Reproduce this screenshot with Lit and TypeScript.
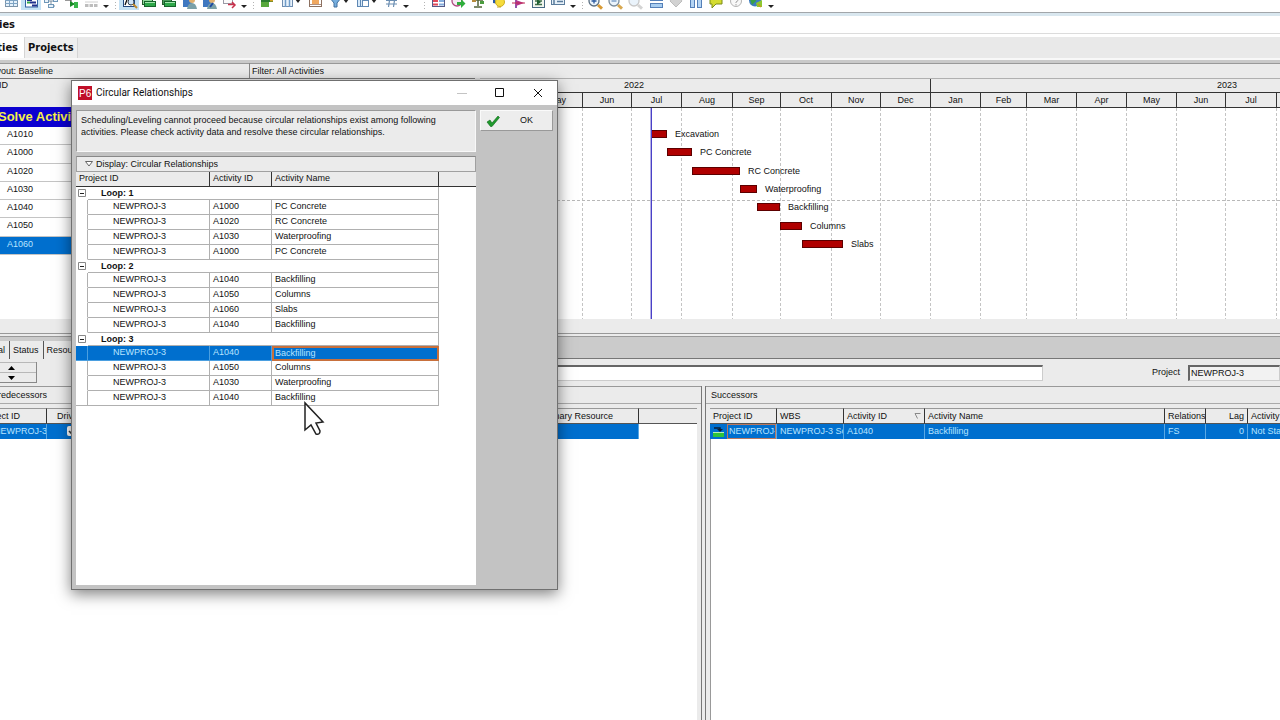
import { LitElement, html, css, svg, nothing } from "lit";
import { customElement } from "lit/decorators.js";
import { classMap } from "lit/directives/class-map.js";

interface Tool {
  name: string;
  art: unknown;
  on?: boolean;
  menu?: boolean;
}

const green = "#2fa84a";
const people = svg`<rect x="4" y="5" width="9" height="12" fill="#3f78c0"/><circle cx="13" cy="10" r="3" fill="#e0b070"/><path d="M8 19q1-6 5-6t5 6z" fill="#7aa0a8"/>`;
const lens = (c: string, h: string) =>
  svg`<circle cx="8" cy="11" r="5" fill="#eaf3fb" stroke="${c}" stroke-width="1.3"/><path d="M12 15l4 3.600" stroke="${h}" stroke-width="3"/>`;

const groups: Tool[][] = [
  [
    { name: "Activity table", art: svg`<rect x="4.500" y="5.500" width="12" height="11" fill="#e4f1fb" stroke="#7c93a8"/><path d="M4 10.500h13M4 13.500h13M8.500 6v10M12.500 6v10" stroke="#7fa4c4"/>` },
    { name: "Gantt chart", on: true, art: svg`<rect x="4.500" y="4.500" width="12" height="12.500" fill="#fff" stroke="#3464a4"/><path d="M6 10h5M9 12.500h6M11 15.500h5" stroke="#1e2f8c" stroke-width="2"/><path d="M6 12.500h3" stroke="${green}" stroke-width="2"/>` },
    { name: "Activity network", art: svg`<path d="M5 11h5v6M10 11h5M10 16h4" fill="none" stroke="#7a8ea0"/><rect x="3.500" y="9.500" width="4" height="3" fill="#e8f2fa" stroke="#6f97b8"/><rect x="12.500" y="8.500" width="4" height="3" fill="#e8f2fa" stroke="#6f97b8"/><rect x="7.500" y="14.500" width="5" height="3" fill="#e8f2fa" stroke="#6f97b8"/>` },
    { name: "Trace logic", art: svg`<path d="M4 10h6v4h4" fill="none" stroke="#333"/><path d="M9 11l5 3-5 3z" fill="#198a26"/><rect x="13" y="12" width="4" height="6" fill="#39b54a"/>` },
    { name: "Usage", art: svg`<path d="M4 12h13" stroke="#d0d0d0"/><path d="M4 15.500h3.500M8.500 15.500H12M13 15.500h3.500" stroke="#bdbdbd" stroke-width="3"/>` },
  ],
  [
    { name: "Find", on: true, art: svg`<rect x="4.500" y="4.500" width="11" height="12" fill="#fff" stroke="#234a80"/><path d="M6 15l3-8 3 8" fill="none" stroke="#111" stroke-width="1.300"/><circle cx="12" cy="12" r="3" fill="#cfe4f5" stroke="#345"/><path d="M14 14l4 4" stroke="#c08a2c" stroke-width="2"/>` },
    { name: "Predecessors", art: svg`<rect x="3.500" y="6.500" width="10" height="8" fill="#8fd89a" stroke="#245c2c"/><rect x="5.500" y="11.500" width="11" height="5" fill="${green}" stroke="#15642a"/><path d="M6 12.500h10" stroke="#a5e6ae"/>` },
    { name: "Successors", art: svg`<rect x="3.500" y="6.500" width="9" height="8" fill="#4a9a5a" stroke="#245c2c"/><rect x="5.500" y="11.500" width="11" height="5" fill="${green}" stroke="#15642a"/><path d="M6 12.500h10" stroke="#a5e6ae"/>` },
    { name: "Resources", art: people },
    { name: "Roles", art: svg`${people}<path d="M11 17l3-4" stroke="#1c49a0" stroke-width="2"/>` },
    { name: "Codes", art: svg`<rect x="4.500" y="4.500" width="9" height="9" fill="#fafafa" stroke="#9a9aa6"/><path d="M9 14.500h6M13 12l3 3-3 3" fill="none" stroke="#c8304a" stroke-width="1.500"/>` },
  ],
  [
    { name: "Bars", art: svg`<path d="M4 8h12v4H4z" fill="#2c7c30"/><path d="M4 12h8v5H4z" fill="#57a83c"/><path d="M13 10h3" stroke="#d0a020" stroke-width="3"/>` },
    { name: "Columns", menu: true, art: svg`<rect x="5.500" y="5.500" width="10" height="11" fill="#e8f2fb" stroke="#6f8db0"/><path d="M8.500 6v11M12.500 6v11" stroke="#6f9cc8" stroke-width="1.500"/>` },
    { name: "Table font", art: svg`<rect x="4.500" y="5.500" width="12" height="11" fill="#fff" stroke="#8c7060"/><rect x="7" y="9" width="7" height="5" fill="#f0a860"/><path d="M5 14.500h11" stroke="#b09080"/>` },
    { name: "Filter", menu: true, art: svg`<path d="M5 8h11l-4 5v4H9v-4z" fill="#76aede" stroke="#416f9e"/>` },
    { name: "Group and sort", menu: true, art: svg`<rect x="4.500" y="5.500" width="11" height="11" fill="#d8eafa" stroke="#5f88b4"/><rect x="9.500" y="10.500" width="6" height="6" fill="#fff" stroke="#5f88b4"/><path d="M7.500 6v10" stroke="#5f88b4"/>` },
    { name: "Number", art: svg`<path d="M9 7L7.500 17M14 7l-1.500 10M5 10.500h11M5 14h11" stroke="#6b8eb2" stroke-width="1.200"/>` },
  ],
  [
    { name: "Spreadsheet", art: svg`<rect x="4.500" y="5.500" width="12" height="11" fill="#fff" stroke="#555a88"/><path d="M5 11h5M5 14.500h5" stroke="#e04858" stroke-width="2"/><path d="M11 11h5M11 14.500h5" stroke="#86aede" stroke-width="2"/>` },
    { name: "Schedule", art: svg`<circle cx="9" cy="11" r="5" fill="#f6e9f2" stroke="#b04a80" stroke-width="1.300"/><path d="M9 12h4V9l4.500 4.500L13 18v-3H9z" fill="#2fae3c"/>` },
    { name: "Level", art: svg`<path d="M10 8v8M6 17h8M5 10h10" stroke="#53643a" stroke-width="1.500"/><rect x="4" y="9" width="4" height="3" fill="#b78b3c"/><rect x="12" y="11" width="4" height="3" fill="#4c9c40"/>` },
    { name: "Progress", art: svg`<path d="M5 8l6 6-6-1z" fill="#2b5aa8"/><circle cx="12" cy="12" r="4.500" fill="#f6dc3c" stroke="#cfb020"/><path d="M9 17h4" stroke="#caa820"/>` },
    { name: "Spotlight", art: svg`<path d="M8 7v11" stroke="#6a1f90" stroke-width="1.500"/><path d="M8 10l8 3-8 3z" fill="#b43890"/><path d="M4 13h13" stroke="#c02850"/>` },
    { name: "Update", art: svg`<rect x="4.500" y="5.500" width="12" height="12" fill="#f2f6ee" stroke="#496a84"/><path d="M7 11h7M7 14.500h7" stroke="#3f6d48" stroke-width="1.500"/><path d="M9 9l4 3-4 3z" fill="#1f6030"/>` },
    { name: "Store period", art: svg`<rect x="3.500" y="5.500" width="13" height="9" fill="#e6f0f8" stroke="#5b7c9c"/><path d="M6 9v6M9 11.500h6M9 9h6" stroke="#5b7c9c" stroke-width="1.500"/>` },
  ],
  [
    { name: "Zoom in", art: svg`${lens("#5a6e80", "#d89a34")}<path d="M5.500 11h5M8 8.500v5" stroke="#2a5aa0" stroke-width="1.300"/>` },
    { name: "Zoom out", art: svg`${lens("#7a8c9c", "#d8a850")}<path d="M5.500 11h5" stroke="#4a78b0"/>` },
    { name: "Zoom to fit", art: lens("#c8c8c8", "#d4d4d4") },
    { name: "Split horizontal", art: svg`<rect x="4.500" y="5.500" width="12" height="5" fill="#eaf3fc" stroke="#5580b8"/><rect x="4.500" y="13.500" width="12" height="4" fill="#a8cdf0" stroke="#5580b8"/>` },
    { name: "Hint", art: svg`<path d="M10 17l-6-6 3-4h6l3 4z" fill="#d2d2d2" stroke="#bcbcbc"/>` },
    { name: "Split vertical", art: svg`<rect x="4.500" y="5.500" width="4" height="12" fill="#b5d5f4" stroke="#5580b8"/><rect x="11.500" y="5.500" width="4" height="12" fill="#b5d5f4" stroke="#5580b8"/>` },
    { name: "Discussion", art: svg`<path d="M4 7h12v7h-6l-4 4v-4H4z" fill="#d4dc30" stroke="#7c8c18"/>` },
    { name: "Help", art: svg`<circle cx="10" cy="11" r="5.500" fill="#f8f8f8" stroke="#b4b4b4"/><path d="M8.500 9q1.500-2 3 0t-1.500 3v1M10 14v1.500" fill="none" stroke="#a4a4a4"/>` },
    { name: "Online", art: svg`<circle cx="9" cy="10.500" r="6" fill="#3c7cc0"/><path d="M4 9l5-2 1 4-4 4z" fill="#38a048"/><path d="M10 13l6-3v7h-5z" fill="#8cc832"/><path d="M12 14l3 3" stroke="#c89a20" stroke-width="1.500"/>` },
  ],
];

/* Column widths of the two-year timescale, January 2022 onwards. */
const months: [string, number][] = [
  ["Jan", 50], ["Feb", 46], ["Mar", 50], ["Apr", 49], ["May", 50], ["Jun", 49],
  ["Jul", 50], ["Aug", 51], ["Sep", 48], ["Oct", 51], ["Nov", 49], ["Dec", 50],
  ["Jan", 50], ["Feb", 46], ["Mar", 50], ["Apr", 50], ["May", 50], ["Jun", 49],
  ["Jul", 51], ["Aug", 50], ["Sep", 48], ["Oct", 50], ["Nov", 49], ["Dec", 50],
];

const activities = [
  { id: "A1010", name: "Excavation", start: 314, length: 16 },
  { id: "A1000", name: "PC Concrete", start: 330, length: 25 },
  { id: "A1020", name: "RC Concrete", start: 355, length: 48 },
  { id: "A1030", name: "Waterproofing", start: 403, length: 17 },
  { id: "A1040", name: "Backfilling", start: 420, length: 23 },
  { id: "A1050", name: "Columns", start: 443, length: 22 },
  { id: "A1060", name: "Slabs", start: 465, length: 41 },
];

const nameOf = (id: string) => activities.find((a) => a.id === id)!.name;

const loops = [
  ["A1000", "A1020", "A1030", "A1000"],
  ["A1040", "A1050", "A1060", "A1040"],
  ["A1040", "A1050", "A1030", "A1040"],
];

const base = css`
  * { box-sizing: border-box; }
  button, input { font: inherit; color: inherit; margin: 0; padding: 0; border: 0; border-radius: 0; background: none; }
  table { border-collapse: separate; border-spacing: 0; table-layout: fixed; width: 100%; }
  th, td { padding: 0; font-weight: 400; text-align: left; vertical-align: top; white-space: nowrap; overflow: hidden; }
`;

@customElement("p6-toolbar")
class P6Toolbar extends LitElement {
  static styles = [base, css`
    :host { display: flex; align-items: flex-end; height: 13px; padding: 0 0 2px 1px; overflow: hidden; background: #fff; border-bottom: 1px solid #a2a6aa; }
    .group { display: flex; }
    .sep { width: 8px; height: 14px; flex: none; background: repeating-linear-gradient(#b4b4b4 0 1px, transparent 1px 3px) center / 1px 100% no-repeat; }
    .sep.wide { width: 17px; background-position: 13px 0; }
    .tool { display: flex; width: 20px; height: 20px; }
    .tool.menu { width: 28px; }
    .tool.on { background: #c5e2f5; }
    .more { width: 10px; height: 20px; }
    svg { display: block; }
  `];
  render() {
    return groups.map((g, i) => html`
      ${i ? html`<span class=${classMap({ sep: true, wide: i === 3 })}></span>` : nothing}
      <div class="group">
        ${g.map((t) => html`<button class=${classMap({ tool: true, on: !!t.on, menu: !!t.menu })} aria-label=${t.name}>
          <svg width=${t.menu ? 28 : 20} height="20">${t.art}${t.menu ? svg`<path d="M18 9h6l-3 4z" fill="#222"/>` : nothing}</svg>
        </button>`)}
        <button class="more" aria-label="More"><svg width="10" height="20"><path d="M2 15h6l-3 3z" fill="#222"/></svg></button>
      </div>`);
  }
}

@customElement("p6-gantt")
class P6Gantt extends LitElement {
  static styles = [base, css`
    :host { display: block; overflow: hidden; background: #fff; min-width: 0; }
    .scale { width: max-content; margin-left: -143px; display: flex; flex-direction: column; height: 241px; }
    .years, .months { display: flex; background: #ebebeb; text-align: center; flex: none; }
    .years { height: 14px; line-height: 13px; border-top: 1px solid #b0b0b0; }
    .year { border-left: 1px solid #333; }
    .months { height: 16px; line-height: 14px; border-top: 1px solid #333; border-bottom: 1px solid #333; }
    .month { border-left: 1px solid #333; }
    .plot { position: relative; flex: 1; display: flex; }
    .line { flex: none; background: repeating-linear-gradient(#c4c4c4 0 3px, transparent 3px 5px) 0 0 / 1px 100% no-repeat; }
    .now { position: absolute; top: 0; bottom: 0; left: 313px; border-left: 1px solid #b4b0e4; border-right: 1px solid #4a40c8; }
    .rows { position: absolute; inset: 20px 0 auto 0; height: 128px; display: grid; grid-template-rows: repeat(7, 1fr); line-height: 12px; }
    .row { display: flex; align-items: center; gap: 8px; padding-bottom: 6px; }
    .row.fifth { background: repeating-linear-gradient(90deg, #b8b8b8 0 3px, transparent 3px 5px) 0 100% / 100% 1px no-repeat; }
    .bar { height: 8px; background: #b00000; border: 1px solid #5c0000; }
  `];
  render() {
    const span = (from: number) => months.slice(from, from + 12).reduce((s, m) => s + m[1], 0);
    return html`<div class="scale">
      <div class="years">
        <div class="year" style="width:${span(0)}px">2022</div>
        <div class="year" style="width:${span(12)}px">2023</div>
      </div>
      <div class="months">${months.map(([m, w]) => html`<div class="month" style="width:${w}px">${m}</div>`)}</div>
      <div class="plot">
        ${months.map(([, w]) => html`<div class="line" style="width:${w}px"></div>`)}
        <div class="rows">
          ${activities.map((a, i) => html`<div class=${classMap({ row: true, fifth: i === 3 })} style="padding-left:${a.start}px">
            <span class="bar" style="width:${a.length}px"></span><span>${a.name}</span></div>`)}
        </div>
        <div class="now"></div>
      </div>
    </div>`;
  }
}

@customElement("p6-dialog")
class P6Dialog extends LitElement {
  static styles = [base, css`
    :host { display: flex; flex-direction: column; width: 487px; height: 510px; background: #c3c3c3; border: 1px solid #707070; box-shadow: 0 4px 14px rgba(0, 0, 0, 0.5); }
    .title { display: flex; align-items: center; height: 24px; padding-left: 6px; gap: 4px; background: #fff; flex: none; }
    .title h1 { flex: 1; margin: 0; font: 400 10px/14px Roboto, sans-serif; color: #111; }
    .winctl { display: flex; }
    .winctl button { display: flex; width: 38px; height: 24px; align-items: center; justify-content: center; }
    .body { flex: 1; display: flex; gap: 4px; padding: 5px 4px 4px 4px; min-height: 0; }
    .main { width: 400px; display: flex; flex-direction: column; gap: 4px; }
    .note { height: 42px; margin: 0; padding: 3px 4px; line-height: 12px; background: #ebebeb; border: 1px solid #f8f8f8; border-top-color: #999; border-left-color: #999; white-space: nowrap; }
    .list { flex: 1; background: #fff; }
    .display { display: flex; align-items: center; gap: 3px; width: 100%; height: 16px; padding-left: 8px; text-align: left; background: #ebebeb; border: 1px solid #a0a0a0; border-top-color: #888; }
    .ok { display: flex; align-items: center; width: 73px; height: 21px; padding-left: 5px; gap: 20px; background: #ededed; border: 1px solid #fafafa; border-right-color: #999; border-bottom-color: #999; }
    .c0 { width: 12px; } .c1 { width: 122px; } .c2 { width: 62px; } .c3 { width: 167px; }
    th { height: 15px; line-height: 13px; padding-left: 3px; background: #ebebeb; border-bottom: 1px solid #333; border-right: 1px solid #333; }
    th:last-child { border-right: 0; }
    td { height: 15px; line-height: 13px; padding-left: 3px; border-right: 1px solid #b0b0b0; border-bottom: 1px solid #b0b0b0; }
    td.g { border-bottom-color: transparent; padding: 0; }
    td.p { padding-left: 25px; }
    td.e { border: 0; }
    .loop td { height: 13px; line-height: 12px; font-weight: 700; }
    .loop td.g { border-right-color: transparent; padding: 2px; }
    .loop td.name { padding-left: 13px; }
    .sel td:not(.e) { background: #006fce; color: #b8e4ff; border-color: #4b9fe0; }
    .sel td.focus:not(.e) { border: 2px solid #c8703c; padding-left: 1px; line-height: 11px; }
    .end td.g { border-bottom-color: #b0b0b0; }
    .fold { display: block; width: 8px; height: 8px; }
    svg { display: block; }
  `];
  render() {
    return html`
      <div class="title">
        <svg width="14" height="14"><rect width="14" height="14" fill="#c00f28"/><text x="1" y="11" font-size="10" fill="#fff" font-family="Liberation Sans, sans-serif">P6</text></svg>
        <h1>Circular Relationships</h1>
        <div class="winctl">
          <button aria-label="Minimize" disabled><svg width="10" height="10"><path d="M0 5.500h10" stroke="#c4c4c4"/></svg></button>
          <button aria-label="Maximize"><svg width="10" height="10"><path d="M.5.5h8v8h-8z" fill="none" stroke="#111"/></svg></button>
          <button aria-label="Close"><svg width="10" height="10"><path d="M1 1l8 8M9 1L1 9" stroke="#111"/></svg></button>
        </div>
      </div>
      <div class="body">
        <div class="main">
          <p class="note">Scheduling/Leveling cannot proceed because circular relationships exist among following<br>activities. Please check activity data and resolve these circular relationships.</p>
          <div class="list">
            <button class="display"><svg width="8" height="6"><path d="M.5.500h7L4 5z" fill="#fff" stroke="#666"/></svg>Display: Circular Relationships</button>
            <table>
              <colgroup><col class="c0"><col class="c1"><col class="c2"><col class="c3"><col></colgroup>
              <thead><tr><th colspan="2">Project ID</th><th>Activity ID</th><th>Activity Name</th><th></th></tr></thead>
              <tbody>${loops.map((ids, n) => html`
                <tr class="loop"><td class="g"><button class="fold" aria-label="Collapse loop ${n + 1}"><svg width="8" height="8"><path d="M.5.5h7v7h-7z" fill="#fff" stroke="#888"/><path d="M2 4.500h4" stroke="#222"/></svg></button></td>
                  <td class="name" colspan="3">Loop: ${n + 1}</td><td class="e"></td></tr>
                ${ids.map((id, i) => {
                  const sel = n === 2 && i === 0;
                  return html`<tr class=${classMap({ sel, end: n === 2 && i === 3 })}><td class="g"></td><td class="p">NEWPROJ-3</td><td>${id}</td>
                    <td class=${classMap({ focus: sel })}>${nameOf(id)}</td><td class="e"></td></tr>`;
                })}`)}
              </tbody>
            </table>
          </div>
        </div>
        <div class="side">
          <button class="ok"><svg width="14" height="12"><path d="M1 7l3-2 2 3 6-7 1.500 1.500L6 11.500H4.500z" fill="#1f9a2c" stroke="#0c6418" stroke-width=".6"/></svg>OK</button>
        </div>
      </div>`;
  }
}

@customElement("app-root")
class AppRoot extends LitElement {
  static styles = [base, css`
    :host { position: relative; display: flex; flex-direction: column; height: 100vh; overflow: hidden; background: #fff; color: #111; font: 9px/13px "Liberation Sans", Arial, sans-serif; }
    .heading { height: 21px; border-top: 3px solid #d9e7ef; border-bottom: 1px solid #dcdcdc; flex: none; }
    .heading h1, .tab { margin: 0; font: 700 11px/18px "DejaVu Sans Condensed", "DejaVu Sans", sans-serif; color: #111; }
    .heading h1 { width: 15px; display: flex; justify-content: flex-end; }
    .tabs { display: flex; height: 23px; margin-top: 3px; background: #e9e9e9; border-bottom: 2px solid #f8f8f8; flex: none; }
    .tab { height: 20px; margin-top: 1px; padding: 0 3px; background: #efefef; border-right: 1px solid #d4d4d4; }
    .tab.on { width: 25px; margin: 0; height: 21px; padding: 0 6px 0 0; display: flex; align-items: center; justify-content: flex-end; background: #fff; overflow: hidden; }
    .layout { display: flex; height: 18px; line-height: 14px; border-top: 3px solid #c9c9c9; box-shadow: inset 0 1px #999; background: #ebebeb; flex: none; }
    .layout span { padding: 1px 0 0 2px; }
    .layout .name { width: 250px; padding-left: 0; border-right: 1px solid #888; white-space: nowrap; }
    .layout .inner { display: flex; width: 53px; padding: 0; justify-content: flex-end; }
    .upper { display: flex; flex: none; }
    .acts { width: 475px; background: #fff; display: flex; flex-direction: column; height: 241px; overflow: hidden; }
    .acts .head { height: 29px; background: #ebebeb; border-top: 1px solid #777; flex: none; }
    .acts .head span { display: flex; width: 8px; justify-content: flex-end; white-space: nowrap; }
    .acts .group { height: 20px; font: 700 13px/19px "Liberation Sans", sans-serif; color: #f6f04a; background: #0c00d0; text-indent: -2px; flex: none; }
    .acts ul { list-style: none; margin: 0; padding: 0; display: grid; grid-template-rows: repeat(7, 1fr); height: 128px; flex: none; }
    .acts li { padding-left: 7px; border-bottom: 1px solid #c4c4c4; line-height: 14px; }
    .acts li.sel { background: #006fce; color: #b8e4ff; }
    .split { width: 5px; background: #ddd; }
    p6-gantt { flex: 1; }
    .scroll { height: 18px; background: #ebebeb; border-bottom: 4px double #999; flex: none; }
    .detail-tabs { display: flex; height: 22px; padding-top: 4px; background: #cbcbcb; border-bottom: 1px solid #777; flex: none; }
    .detail-tabs button { height: 18px; padding: 0 4px 0 3px; background: #ebebeb; border-right: 1px solid #555; }
    .detail-tabs .first { width: 10px; display: flex; align-items: center; justify-content: flex-end; overflow: hidden; }
    .form { display: flex; align-items: center; height: 27px; background: #ebebeb; flex: none; }
    .spin { width: 37px; display: grid; border-right: 1px solid #888; border-bottom: 1px solid #888; }
    .spin button { height: 10px; display: flex; align-items: center; padding-left: 8px; border-top: 1px solid #b8b8b8; }
    .form input { height: 16px; background: #fff; border-top: 2px solid #666; border-bottom: 1px solid #ccc; border-right: 1px solid #ccc; }
    .form .act { flex: 1; margin-left: 80px; min-width: 0; }
    .form label { margin: 0 8px 0 109px; }
    .form .proj { width: 92px; padding-left: 1px; background: #f2f2f2; border-left: 2px solid #666; }
    .lower { flex: 1; display: flex; min-height: 0; }
    .pane { display: flex; flex-direction: column; min-width: 0; }
    .pred { width: 702px; border-right: 1px solid #777; }
    .succ { flex: 1; border-left: 1px solid #777; }
    .gap { width: 3px; background: #ebebeb; }
    .pane h2 { margin: 0; height: 18px; font-size: 9px; font-weight: 400; line-height: 16px; padding-left: 5px; background: #ebebeb; border-top: 1px solid #999; border-bottom: 1px solid #aaa; flex: none; }
    .pred h2 { padding: 0; }
    .pred h2 span { display: flex; width: 47px; justify-content: flex-end; }
    .grid { flex: 1; overflow: hidden; border: 4px solid #ebebeb; border-bottom: 0; border-right: 0; }
    .succ .grid { background: linear-gradient(90deg, #999 1px, transparent 1px); }
    .pred .grid { border-left: 0; border-right: 4px solid #ebebeb; }
    .grid th { height: 16px; padding-left: 3px; line-height: 14px; background: #ebebeb; border-top: 1px solid #999; border-bottom: 1px solid #555; border-right: 1px solid #333; }
    .grid td { height: 15px; line-height: 14px; padding-left: 3px; background: #006fce; color: #b8e4ff; border-right: 1px solid #5aa8e4; }
    .grid .num { text-align: right; padding: 0 3px 0 0; }
    .grid .res { padding-right: 22px; }
    .grid td.blank { background: #fff; border: 0; }
    .grid th.blank { border-right: 0; }
    .grid .sort { display: flex; justify-content: space-between; align-items: center; padding-right: 3px; }
    .grid td.mark { padding: 0; }
    .mark div { display: flex; }
    .mark svg { flex: none; margin-left: 2px; }
    .mark span { flex: 1; height: 15px; margin-left: 2px; padding-left: 1px; line-height: 13px; border: 1px solid #b87860; overflow: hidden; }
    .grid .cut { padding: 0; }
    .cut div { display: flex; justify-content: flex-end; }
    th.cut div { width: 20px; }
    td.cut div { width: 47px; }
    .grid .drv { padding-left: 10px; }
    .grid td.drv { padding: 2px 0 0 20px; }
    .tick { display: block; width: 10px; height: 10px; accent-color: #fff; }
    .w41 { width: 41px; } .w42 { width: 42px; } .w47 { width: 47px; } .w67 { width: 67px; } .w81 { width: 81px; } .w107 { width: 107px; } .w240 { width: 240px; } .w485 { width: 485px; }
    .modal { position: absolute; left: 71px; top: 80px; }
    .pointer { position: absolute; left: 303px; top: 401px; }
  `];
  render() {
    return html`
      <p6-toolbar></p6-toolbar>
      <header class="heading"><h1>Activities</h1></header>
      <nav class="tabs"><button class="tab on">Activities</button><button class="tab">Projects</button></nav>
      <div class="layout"><span class="name"><span class="inner">Layout: Baseline</span></span><span>Filter: All Activities</span></div>
      <section class="upper">
        <div class="acts">
          <div class="head"><span>Activity ID</span></div>
          <div class="group">Solve Activities</div>
          <ul>${activities.map((a, i) => html`<li class=${classMap({ sel: i === 6 })}>${a.id}</li>`)}</ul>
        </div>
        <div class="split"></div>
        <p6-gantt></p6-gantt>
      </section>
      <div class="scroll"></div>
      <nav class="detail-tabs"><button class="first">General</button><button>Status</button><button>Resources</button></nav>
      <section class="form">
        <div class="spin">
          <button aria-label="Previous activity"><svg width="7" height="4"><path d="M0 4l3.500-4L7 4z"/></svg></button>
          <button aria-label="Next activity"><svg width="7" height="4"><path d="M0 0l3.500 4L7 0z"/></svg></button>
        </div>
        <input class="act" aria-label="Activity">
        <label for="proj">Project</label><input class="proj" id="proj" value="NEWPROJ-3" readonly>
      </section>
      <section class="lower">
        <div class="pane pred">
          <h2><span>Predecessors</span></h2>
          <div class="grid"><table>
            <colgroup><col class="w47"><col class="w107"><col class="w485"><col></colgroup>
            <tr><th class="cut"><div>Project ID</div></th><th class="drv">Driving</th><th class="num"><div class="res">Primary Resource</div></th><th class="blank"></th></tr>
            <tr><td class="cut"><div>NEWPROJ-3</div></td><td class="drv"><input class="tick" type="checkbox" aria-label="Driving" checked></td><td></td><td class="blank"></td></tr>
          </table></div>
        </div>
        <div class="gap"></div>
        <div class="pane succ">
          <h2>Successors</h2>
          <div class="grid"><table>
            <colgroup><col class="w67"><col class="w67"><col class="w81"><col class="w240"><col class="w41"><col class="w42"><col class="w67"></colgroup>
            <tr><th>Project ID</th><th>WBS</th><th><div class="sort">Activity ID<svg width="7" height="7"><path d="M6.500.500H1l2.500 5" fill="none" stroke="#888"/></svg></div></th><th>Activity Name</th><th>Relations</th><th class="num">Lag</th><th>Activity Status</th></tr>
            <tr><td class="mark"><div><svg width="13" height="15"><rect x="1" y="8" width="11" height="5" fill="#2ec43a"/><path d="M1 8.500h11" stroke="#b8f0b8"/><path d="M2 4h6v2" fill="none" stroke="#0a2038" stroke-width="1.500"/><path d="M5 5h6L8 8z" fill="#0a2038"/></svg><span>NEWPROJ-3</span></div></td>
              <td>NEWPROJ-3 Solve</td><td>A1040</td><td>Backfilling</td><td>FS</td><td class="num">0</td><td>Not Started</td></tr>
          </table></div>
        </div>
      </section>
      <p6-dialog class="modal" role="dialog" aria-label="Circular Relationships"></p6-dialog>
      <svg class="pointer" width="22" height="34"><path d="M2 2v27l6-5 5 9q4 1 4-3l-4-8 7-1z" fill="#fff" stroke="#222" stroke-width="1.500"/></svg>`;
  }
}
